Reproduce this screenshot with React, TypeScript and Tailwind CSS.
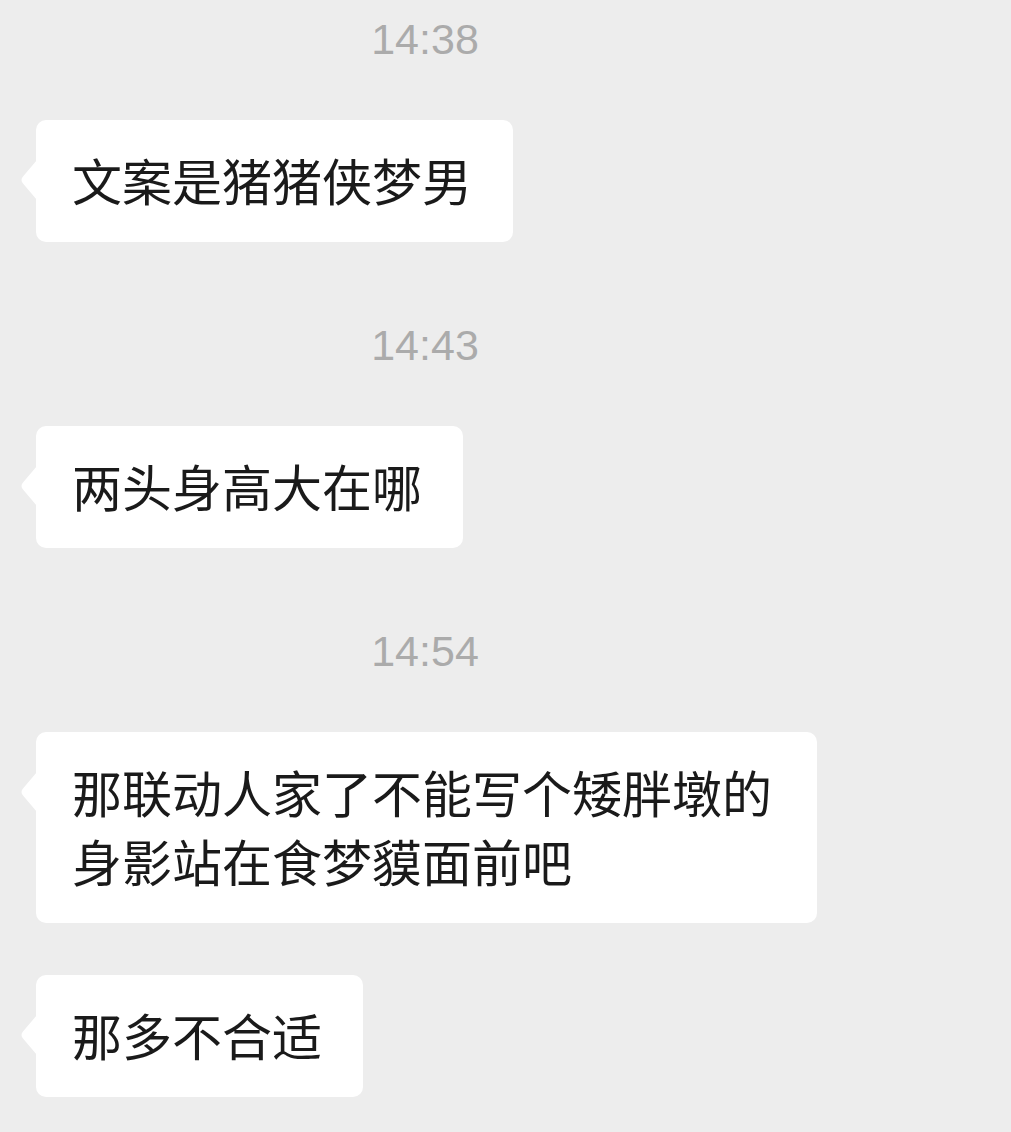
import React from "react";

const cjk = { fontFamily: '"Noto Sans CJK SC", "Noto Sans", sans-serif' };

function Time({ t, first }: { t: string; first?: boolean }) {
  return (
    <div
      className={`w-[850px] h-[50px] leading-[50px] text-center text-[43px] text-[#ababab] mb-[56px] ${first ? "" : "mt-[78px]"}`}
      style={{ fontFamily: '"Liberation Sans", Arial, sans-serif' }}
    >
      {t}
    </div>
  );
}

function Bubble({ children, className = "" }: { children: React.ReactNode; className?: string }) {
  return (
    <div className={`pl-[36px] flex ${className}`}>
      <div
        className="relative bg-white rounded-[10px] pl-[36px] pr-[41px] pt-[25px] pb-[28px] max-w-[781px] text-[50px] leading-[69px] text-[#1a1a1a]"
        style={cjk}
      >
        <svg
          className="absolute left-[-16px] top-[40px]"
          width="17"
          height="40"
          viewBox="0 0 17 40"
        >
          <path d="M17 0 L3 16.5 Q0 20 3 23.5 L17 40 Z" fill="#ffffff" />
        </svg>
        {children}
      </div>
    </div>
  );
}

export default function App() {
  return (
    <div className="w-full min-h-[1132px] bg-[#ededed] pt-[14px] overflow-hidden">
      <Time t="14:38" first />
      <Bubble>文案是猪猪侠梦男</Bubble>
      <Time t="14:43" />
      <Bubble>两头身高大在哪</Bubble>
      <Time t="14:54" />
      <Bubble className="mb-[52px]">那联动人家了不能写个矮胖墩的身影站在食梦貘面前吧</Bubble>
      <Bubble>那多不合适</Bubble>
    </div>
  );
}
